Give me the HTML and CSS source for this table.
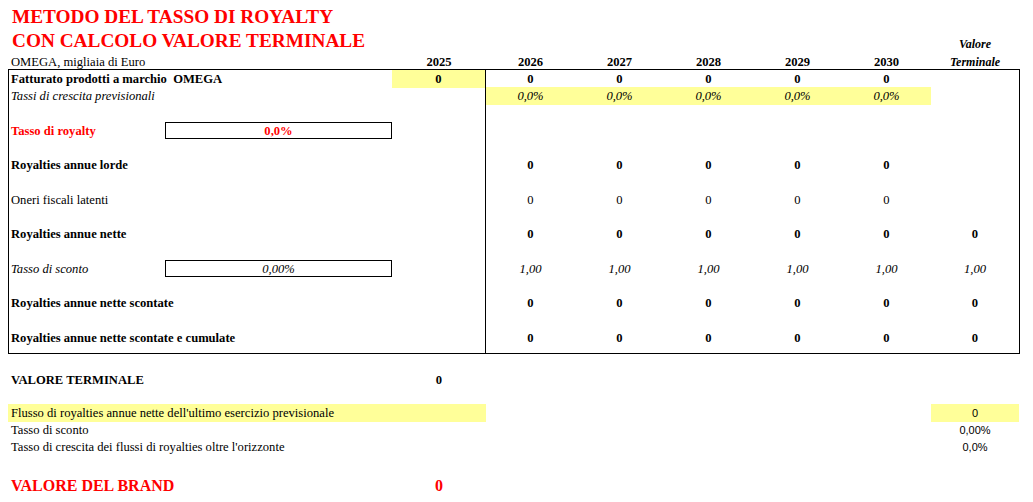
FILE: index.html
```html
<!DOCTYPE html>
<html lang="it">
<head>
<meta charset="utf-8">
<title>Metodo del tasso di royalty</title>
<link rel="stylesheet" href="styles.css">
</head>
<body>
<div class="sheet">
  <div class="trow1"><div class="title">METODO DEL TASSO DI ROYALTY</div></div>
  <div class="og trow2">
    <div class="title t2">CON CALCOLO VALORE TERMINALE</div>
    <div class="vt">Valore</div>
  </div>
  <div class="og hdr">
    <div class="hlab">OMEGA, migliaia di Euro</div>
    <div class="c b">2025</div>
    <div class="c b">2026</div>
    <div class="c b">2027</div>
    <div class="c b">2028</div>
    <div class="c b">2029</div>
    <div class="c b">2030</div>
    <div class="c b i">Terminale</div>
  </div>

  <div class="box">
    <div class="pane-left">
      <div class="lg r"><div class="lbl b">Fatturato prodotti a marchio&nbsp; OMEGA</div><div></div><div class="c b yel">0</div></div>
      <div class="lg r"><div class="lbl i wide">Tassi di crescita previsionali</div></div>
      <div class="sp"></div>
      <div class="lg r"><div class="lbl b red">Tasso di royalty</div><div class="inbox b red">0,0%</div><div></div></div>
      <div class="sp"></div>
      <div class="lg r"><div class="lbl b wide">Royalties annue lorde</div></div>
      <div class="sp"></div>
      <div class="lg r"><div class="lbl wide">Oneri fiscali latenti</div></div>
      <div class="sp"></div>
      <div class="lg r"><div class="lbl b wide">Royalties annue nette</div></div>
      <div class="sp"></div>
      <div class="lg r"><div class="lbl i">Tasso di sconto</div><div class="inbox i">0,00%</div><div></div></div>
      <div class="sp"></div>
      <div class="lg r"><div class="lbl b wide">Royalties annue nette scontate</div></div>
      <div class="sp"></div>
      <div class="lg r"><div class="lbl b wide">Royalties annue nette scontate e cumulate</div></div>
    </div>
    <div class="pane-right">
      <div class="rg r b"><div class="c">0</div><div class="c">0</div><div class="c">0</div><div class="c">0</div><div class="c">0</div><div></div></div>
      <div class="rg r i"><div class="c yel">0,0%</div><div class="c yel">0,0%</div><div class="c yel">0,0%</div><div class="c yel">0,0%</div><div class="c yel">0,0%</div><div></div></div>
      <div class="sp"></div>
      <div class="rg r"></div>
      <div class="sp"></div>
      <div class="rg r b"><div class="c">0</div><div class="c">0</div><div class="c">0</div><div class="c">0</div><div class="c">0</div><div></div></div>
      <div class="sp"></div>
      <div class="rg r"><div class="c">0</div><div class="c">0</div><div class="c">0</div><div class="c">0</div><div class="c">0</div><div></div></div>
      <div class="sp"></div>
      <div class="rg r b"><div class="c">0</div><div class="c">0</div><div class="c">0</div><div class="c">0</div><div class="c">0</div><div class="c">0</div></div>
      <div class="sp"></div>
      <div class="rg r i"><div class="c">1,00</div><div class="c">1,00</div><div class="c">1,00</div><div class="c">1,00</div><div class="c">1,00</div><div class="c">1,00</div></div>
      <div class="sp"></div>
      <div class="rg r b"><div class="c">0</div><div class="c">0</div><div class="c">0</div><div class="c">0</div><div class="c">0</div><div class="c">0</div></div>
      <div class="sp"></div>
      <div class="rg r b"><div class="c">0</div><div class="c">0</div><div class="c">0</div><div class="c">0</div><div class="c">0</div><div class="c">0</div></div>
    </div>
  </div>

  <div class="og brow vterm">
    <div class="blab short b">VALORE TERMINALE</div>
    <div class="c b col3">0</div>
  </div>
  <div class="og brow flusso">
    <div class="blab yel">Flusso di royalties annue nette dell'ultimo esercizio previsionale</div>
    <div class="vcol sans yel">0</div>
  </div>
  <div class="og brow">
    <div class="blab">Tasso di sconto</div>
    <div class="vcol sans">0,00%</div>
  </div>
  <div class="og brow">
    <div class="blab">Tasso di crescita dei flussi di royalties oltre l'orizzonte</div>
    <div class="vcol sans">0,0%</div>
  </div>
  <div class="og brand">
    <div class="blab short">VALORE DEL BRAND</div>
    <div class="c col3">0</div>
  </div>
</div>
</body>
</html>
```

FILE: styles.css
```css
* { box-sizing: border-box; }

body {
  margin: 0;
  font-family: "Liberation Serif", "Times New Roman", serif;
  font-size: 12.6px;
  color: #000;
  background: #fff;
}

.sheet {
  padding: 5px 0 0 8px;
  width: 1020px;
}

.title {
  color: #ff0000;
  font-weight: bold;
  font-size: 19.3px;
  line-height: 24px;
  padding-left: 4px;
  white-space: nowrap;
}

.trow1 { height: 24px; }

.og {
  display: grid;
  grid-template-columns: 157px 227px 94px repeat(5, 89px) 88px;
}

.trow2 {
  height: 24px;
  align-items: end;
}

.t2 { grid-column: 1 / 9; }

.vt {
  grid-column: 9;
  line-height: 17px;
  text-align: center;
  font-weight: bold;
  font-style: italic;
  font-size: 12px;
}

.hdr {
  height: 16px;
  line-height: 18px;
  white-space: nowrap;
}

.hdr .i { font-size: 12px; }

.hlab {
  grid-column: 1 / 3;
  padding-left: 3px;
}

.c { text-align: center; white-space: nowrap; }
.col3 { grid-column: 3; }
.b { font-weight: bold; }
.i { font-style: italic; }
.red { color: #ff0000; }
.yel { background: #ffff99; }

/* bordered block */
.box {
  display: flex;
  width: 1012px;
  border: 1px solid #000;
}

.pane-left {
  width: 476px;
  padding-bottom: 7px;
}

.pane-right {
  width: 534px;
  border-left: 1px solid #000;
  padding-bottom: 7px;
}

.lg {
  display: grid;
  grid-template-columns: 156px 227px 93px;
}

.rg {
  display: grid;
  grid-template-columns: repeat(5, 89px) 88px;
}

.r {
  height: 17px;
  line-height: 18px;
}

.sp { height: 17.5px; }

.lbl {
  padding-left: 2px;
  white-space: nowrap;
}

.wide { grid-column: 1 / 4; }

.inbox {
  border: 1px solid #000;
  height: 17px;
  line-height: 16px;
  text-align: center;
}

/* bottom section */
.brow {
  height: 17px;
  line-height: 18px;
}

.vterm { margin-top: 17px; margin-bottom: 16px; }

.blab {
  grid-column: 1 / 4;
  padding-left: 3px;
  white-space: nowrap;
}

.blab.short { grid-column: 1 / 3; }

.vcol {
  grid-column: 9;
  text-align: center;
}

.sans {
  font-family: "Liberation Sans", Arial, sans-serif;
  font-size: 11px;
}

.brand {
  margin-top: 20px;
  height: 22px;
  line-height: 22px;
  font-size: 16px;
  font-weight: bold;
  color: #ff0000;
}
```
